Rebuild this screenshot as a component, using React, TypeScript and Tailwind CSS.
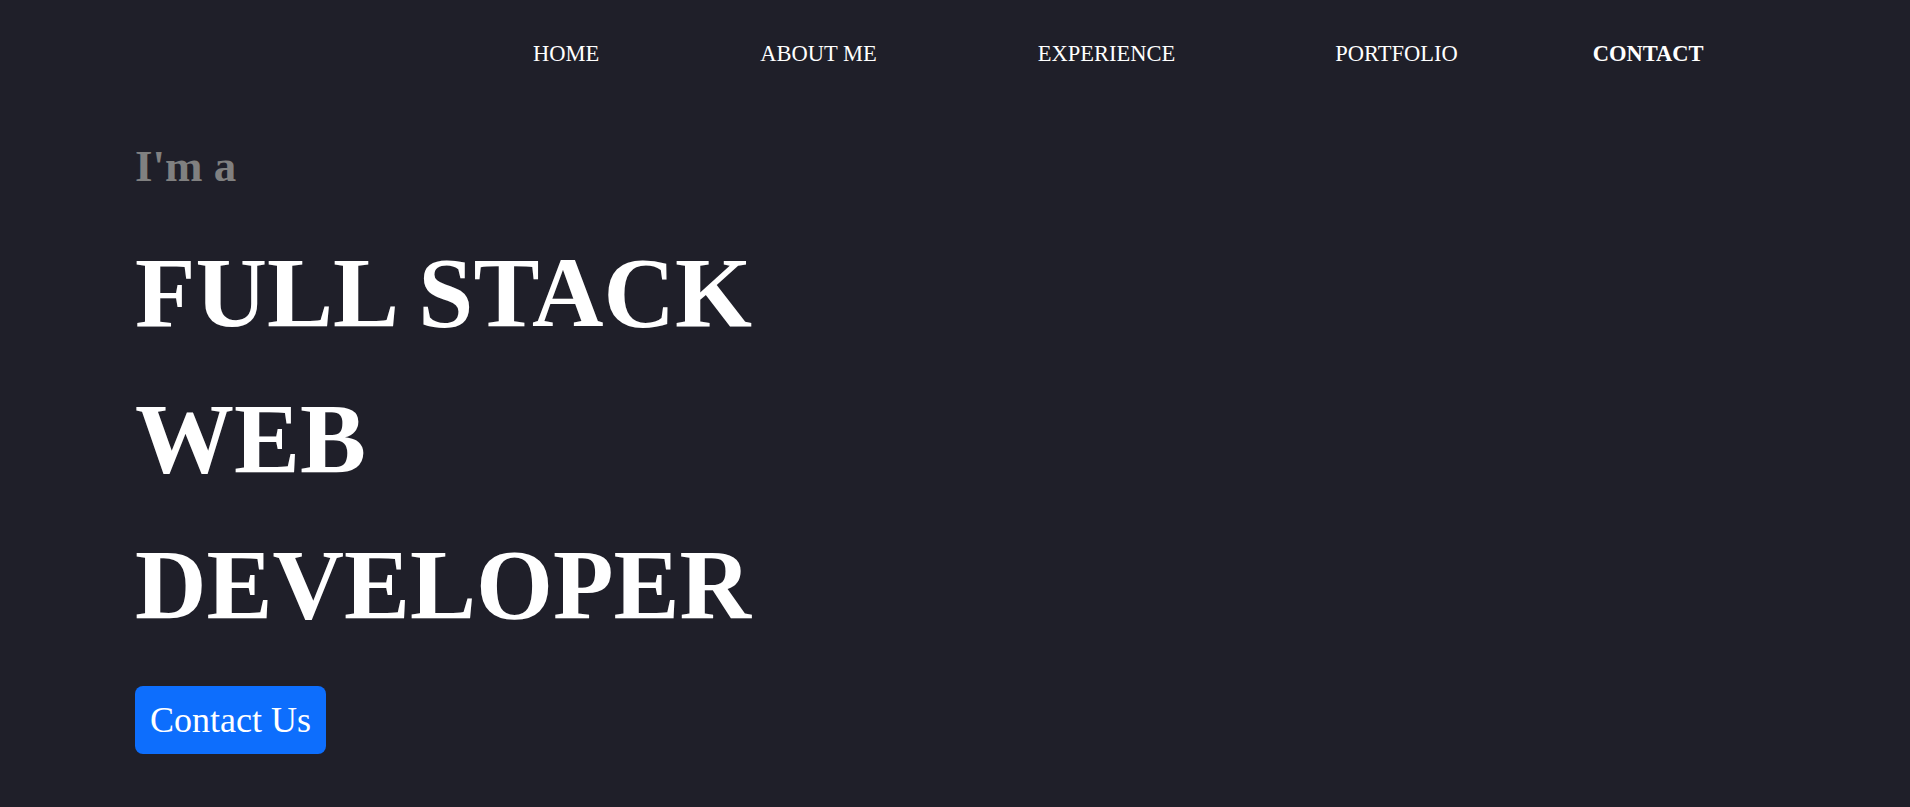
const navItems = [
  { label: "HOME", cls: "" },
  { label: "ABOUT ME", cls: "ml-[161px]" },
  { label: "EXPERIENCE", cls: "ml-[161px]" },
  { label: "PORTFOLIO", cls: "ml-[160px]" },
  { label: "CONTACT", cls: "ml-[135px] font-bold" },
];

export default function App() {
  return (
    <div className="min-h-[807px] w-full bg-[#1f1f29] font-['Liberation_Serif','Times_New_Roman',serif] text-white">
      {/* Top navigation */}
      <nav className="flex h-[108px] items-center pl-[533px]">
        <ul className="flex items-center text-[22.5px] leading-none">
          {navItems.map((item) => (
            <li key={item.label} className={item.cls}>
              <a href="#">{item.label}</a>
            </li>
          ))}
        </ul>
      </nav>

      {/* Hero */}
      <section className="pl-[135px]">
        <h3 className="mt-[31px] text-[45px] font-bold leading-[1.2] text-[#808080]">I&apos;m a</h3>
        <h1 className="mt-[27px] text-[99px] font-bold leading-[146px]">
          FULL STACK
          <br />
          WEB
          <br />
          DEVELOPER
        </h1>
        <button
          type="button"
          className="mt-[28px] rounded-[8px] bg-[#0d6efd] px-[15px] py-[7px] text-[36px] leading-[1.5] text-white"
        >
          Contact Us
        </button>
      </section>
    </div>
  );
}
